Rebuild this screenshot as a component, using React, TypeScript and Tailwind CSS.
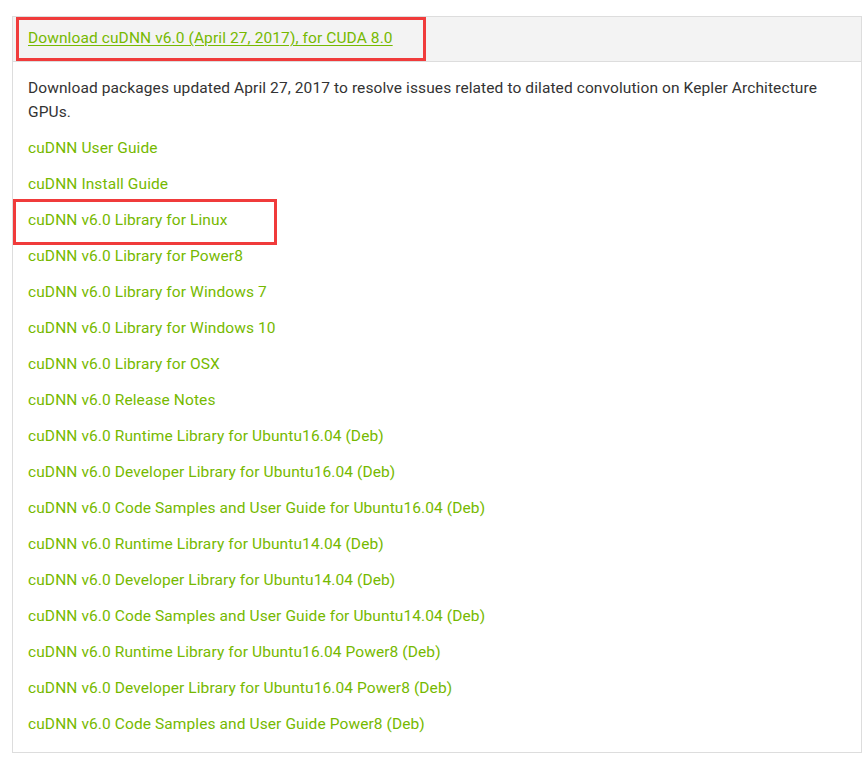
const links = [
  "cuDNN User Guide",
  "cuDNN Install Guide",
  "cuDNN v6.0 Library for Linux",
  "cuDNN v6.0 Library for Power8",
  "cuDNN v6.0 Library for Windows 7",
  "cuDNN v6.0 Library for Windows 10",
  "cuDNN v6.0 Library for OSX",
  "cuDNN v6.0 Release Notes",
  "cuDNN v6.0 Runtime Library for Ubuntu16.04 (Deb)",
  "cuDNN v6.0 Developer Library for Ubuntu16.04 (Deb)",
  "cuDNN v6.0 Code Samples and User Guide for Ubuntu16.04 (Deb)",
  "cuDNN v6.0 Runtime Library for Ubuntu14.04 (Deb)",
  "cuDNN v6.0 Developer Library for Ubuntu14.04 (Deb)",
  "cuDNN v6.0 Code Samples and User Guide for Ubuntu14.04 (Deb)",
  "cuDNN v6.0 Runtime Library for Ubuntu16.04 Power8 (Deb)",
  "cuDNN v6.0 Developer Library for Ubuntu16.04 Power8 (Deb)",
  "cuDNN v6.0 Code Samples and User Guide Power8 (Deb)",
];

export default function App() {
  return (
    <div className="min-h-screen bg-white pt-4 pl-3 pr-[3px] font-['Roboto',sans-serif] text-[15.5px] tracking-[0.1px]">
      <div className="relative border border-[#dddddd]">
        {/* header */}
        <div className="flex h-[45px] items-center border-b border-[#dddddd] bg-[#f3f3f3] px-[15px]">
          <a href="#" className="text-[#76b900] underline underline-offset-2">
            Download cuDNN v6.0 (April 27, 2017), for CUDA 8.0
          </a>
        </div>

        {/* body */}
        <div className="px-[15px] pt-[14px] pb-[10px]">
          <p className="leading-6 text-[#333333]">
            Download packages updated April 27, 2017 to resolve issues related to dilated convolution on Kepler
            Architecture GPUs.
          </p>
          <div className="mt-[6px] flex flex-col">
            {links.map((l) => (
              <a key={l} href="#" className="leading-9 text-[#76b900]">
                {l}
              </a>
            ))}
          </div>
        </div>

        {/* annotation boxes */}
        <div className="absolute left-[3px] top-0 h-[44px] w-[410px] border-[3px] border-[#f03b3b]" />
        <div className="absolute left-0 top-[182px] h-[46px] w-[264px] border-[3px] border-[#f03b3b]" />
      </div>
    </div>
  );
}
